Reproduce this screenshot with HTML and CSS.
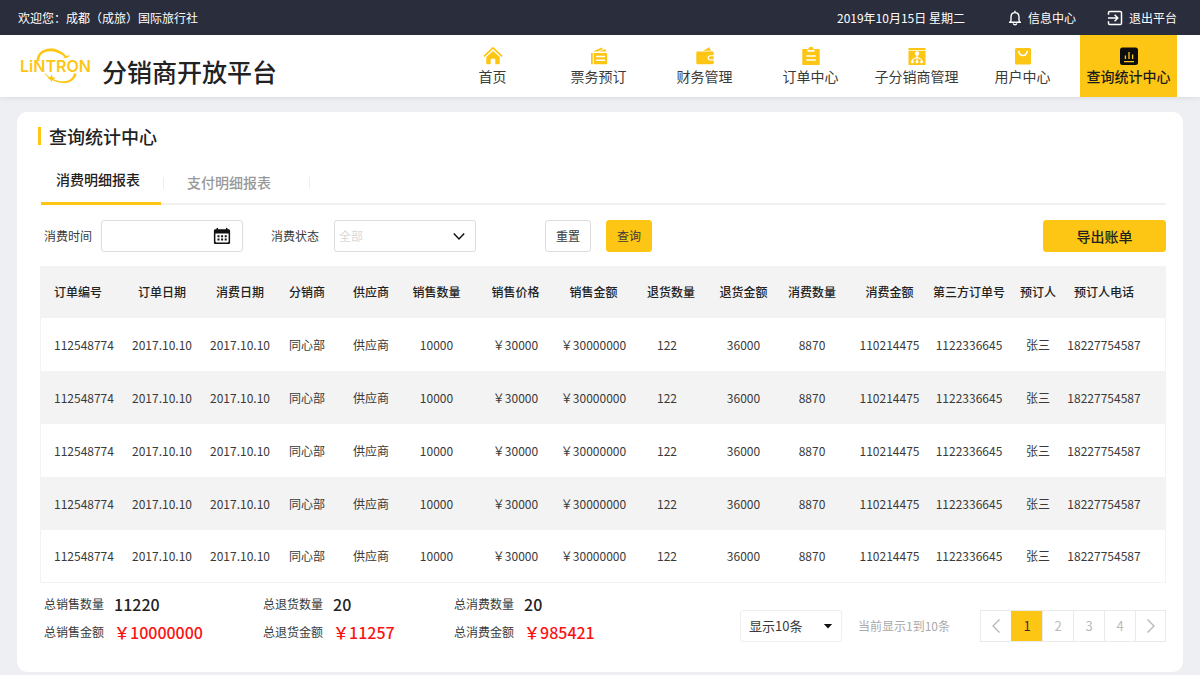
FILE: index.html
```html
<!DOCTYPE html>
<html lang="zh-CN">
<head>
<meta charset="utf-8">
<meta name="viewport" content="width=device-width, initial-scale=1">
<title>查询统计中心 - 分销商开放平台</title>
<link rel="stylesheet" href="styles.css">
</head>
<body>
<div class="topbar">
  <span class="welcome">欢迎您：成都（成旅）国际旅行社</span>
  <span class="today">2019年10月15日 星期二</span>
  <a class="toplink" href="#">
    <svg width="14" height="16" viewBox="0 0 14 16" fill="none" stroke="#fff" stroke-width="1.4"><path d="M1 12.3h12M2.6 12C3.200 10.500 3 9 3 7.200C3 4.400 4.700 2.600 7 2.600s4 1.800 4 4.600c0 1.800-.2 3.300.4 4.800M7 2.600V.8M5.300 13.300c.2 1 .9 1.400 1.700 1.400s1.500-.4 1.700-1.400"/></svg>
    信息中心
  </a>
  <a class="toplink" href="#">
    <svg width="16" height="16" viewBox="0 0 16 16" fill="none" stroke="#fff" stroke-width="1.500"><path d="M1.500 4.800V2.800c0-.8.5-1.300 1.300-1.300h10.400c.8 0 1.300.5 1.300 1.300v10.400c0 .8-.5 1.300-1.300 1.300H2.800c-.8 0-1.300-.5-1.300-1.300v-2M1 8h9.500M7.600 4.800 10.800 8l-3.200 3.200"/></svg>
    退出平台
  </a>
</div>

<header class="header">
  <a class="brand" href="#">
    <svg class="logo" width="76" height="40" viewBox="0 0 76 40">
      <path d="M18.500 15C18.500 6.500 26 1.200 35 2.600c7 1.200 12 5.200 14.400 9.200l-2.400-.5C43 7.500 38 5.200 32.500 5.200 25 5.200 21 9 21.300 15z" fill="#fdc614"/>
      <path d="M27.500 27.500c4 4.500 13 9 20.500 7.600 4.500-.9 7.500-4.200 7.800-7.600h2.700c-.3 4.500-4.400 8.600-10.300 9.400C39 38.200 30.500 32.600 26.500 27.500z" fill="#fdc614"/>
      <path d="M33.500 28.500l1.300 2.800 2.700.9-2.700 1.200-1.300 2.600-1.300-2.600-2.700-1.200 2.700-.9zM45 12.300l2.500-2.300 4.500-.8-2.200 2.400z" fill="#fdc614"/>
      <text class="logo-text" x="2" y="26">LiNTRON</text>
    </svg>
    <span class="brand-name">分销商开放平台</span>
  </a>
  <nav class="nav">
    <a class="nav-item" href="#">
      <svg width="20" height="20" viewBox="0 0 20 20"><path d="M1.500 9.800 10 1.900l8.500 7.900" fill="none" stroke="#fdc614" stroke-width="1.800" stroke-linecap="round" stroke-linejoin="round"/><path d="M3.300 11 10 4.900l6.700 6.100v6.600c0 .4-.3.7-.7.700h-3.700v-4.800c0-.4-.3-.7-.7-.7H8.400c-.4 0-.7.3-.7.700v4.800H4c-.4 0-.7-.3-.7-.7z" fill="#fdc614"/></svg>
      首页
    </a>
    <a class="nav-item" href="#">
      <svg width="20" height="20" viewBox="0 0 20 20" fill="#fdc614"><path d="M4 5.600 12.600 1.500l1.300 1.700-5.400 2.400zM10.500 5.600l5.600-2.500 1.200 2.500zM2 6.900h1.800v11.400H3c-.6 0-1-.4-1-1z"/><path fill-rule="evenodd" d="M4.800 6.900h12.300c.6 0 1 .4 1 1v9.400c0 .6-.4 1-1 1H4.800zM7 9.800v1.400h9V9.800zm0 3.800V15h9v-1.400z"/></svg>
      票务预订
    </a>
    <a class="nav-item" href="#">
      <svg width="20" height="20" viewBox="0 0 20 20" fill="#fdc614"><path d="M8 4.800 14.300 1.300 16 4.800z"/><path fill-rule="evenodd" d="M2.500 5.500h15c.7 0 1.200.5 1.200 1.200v2.500h-3.500a2.600 2.600 0 0 0 0 5.200h3.500v2.700c0 .7-.5 1.200-1.200 1.200h-15c-.7 0-1.200-.5-1.200-1.200V6.700c0-.7.500-1.200 1.200-1.200z"/><path d="M15.300 10.300h3.400v3h-3.400a1.500 1.500 0 0 1 0-3z"/></svg>
      财务管理
    </a>
    <a class="nav-item" href="#">
      <svg width="20" height="20" viewBox="0 0 20 20"><path fill="#fdc614" fill-rule="evenodd" d="M2.300 3h4.900a2.900 2.900 0 0 1 5.600 0h4.900c.6 0 1 .4 1 1v14c0 .6-.4 1-1 1H2.300c-.6 0-1-.4-1-1V4c0-.6.4-1 1-1zM6.500 3.700v2.100h7V3.700h-2.600v.6H9.100v-.6zM5.300 9.300v1.500h9.400V9.300zm0 4V14.800h9.400v-1.500z"/></svg>
      订单中心
    </a>
    <a class="nav-item" href="#">
      <svg width="20" height="20" viewBox="0 0 20 20"><path d="M1.500 2h17v2.200h-17zM1.500 5h17v13c0 .6-.4 1-1 1h-15c-.6 0-1-.4-1-1z" fill="#fdc614"/><path d="M10 8v7M5.400 15v-1.200c0-1.400 4.600-1.400 4.600-3.300 0 1.900 4.600 1.900 4.600 3.300V15" fill="none" stroke="#fff" stroke-width="1.100"/><g fill="#fff"><circle cx="10" cy="7.500" r="2.200"/><circle cx="5.400" cy="15.700" r="1.500"/><circle cx="10" cy="15.700" r="1.500"/><circle cx="14.600" cy="15.700" r="1.500"/></g></svg>
      子分销商管理
    </a>
    <a class="nav-item" href="#">
      <svg width="20" height="20" viewBox="0 0 20 20"><rect x="2" y="2" width="16" height="16.500" rx="1.500" fill="#fdc614"/><path d="M5.800 5.500c.6 2.600 2.200 4 4.200 4s3.600-1.400 4.200-4" fill="none" stroke="#fff" stroke-width="1.500" stroke-linecap="round"/></svg>
      用户中心
    </a>
    <a class="nav-item nav-item-active" href="#" aria-current="page">
      <svg width="20" height="20" viewBox="0 0 20 20"><rect x="1" y="1.500" width="18" height="17.500" rx="2.500" fill="#0d0d0d"/><path d="M6.400 13V9.500M10 13V6M13.600 13V8.500M5 15.600h10" stroke="#fdc614" stroke-width="1.300"/></svg>
      查询统计中心
    </a>
  </nav>
</header>

<main class="card">
  <h1 class="title">查询统计中心</h1>

  <div class="tabs">
    <a class="tab tab-active" href="#" aria-current="true">消费明细报表</a>
    <a class="tab" href="#">支付明细报表</a>
  </div>

  <form class="filters">
    <label class="filter-label" for="time">消费时间</label>
    <div class="field">
      <input class="control" id="time" type="text">
      <svg class="field-icon" width="18" height="18" viewBox="0 0 18 18"><path fill="#111" fill-rule="evenodd" d="M2.500 2.300H3.500V1.500c0-.4.300-.8.800-.8s.8.400.8.800v.8h7.800v-.8c0-.4.300-.8.800-.8s.8.400.8.800v.8h1c.9 0 1.600.7 1.600 1.600v11.500c0 .9-.7 1.600-1.600 1.600h-13c-.9 0-1.600-.7-1.600-1.600V3.900c0-.9.700-1.600 1.600-1.600zM2.400 6.400v8.200c0 .5.300.8.800.8h11.600c.5 0 .8-.3.800-.8V6.400z"/><path d="M4.500 9.200h9.400M4.500 12.600h9.400" stroke="#111" stroke-width="2" stroke-dasharray="2 1.600"/></svg>
    </div>
    <label class="filter-label filter-label-next" for="state">消费状态</label>
    <div class="field">
      <select class="control control-empty" id="state"><option>全部</option></select>
      <svg class="field-icon" width="14" height="14" viewBox="0 0 14 14"><path d="M1.800 4.500 7 10l5.200-5.500" fill="none" stroke="#111" stroke-width="1.500"/></svg>
    </div>
    <button class="btn btn-reset" type="reset">重置</button>
    <button class="btn btn-primary" type="button">查询</button>
    <button class="btn btn-primary btn-export" type="button">导出账单</button>
  </form>

  <table class="orders">
    <thead>
      <tr><th>订单编号</th><th>订单日期</th><th>消费日期</th><th>分销商</th><th>供应商</th><th>销售数量</th><th>销售价格</th><th>销售金额</th><th>退货数量</th><th>退货金额</th><th>消费数量</th><th>消费金额</th><th>第三方订单号</th><th>预订人</th><th>预订人电话</th></tr>
    </thead>
    <tbody>
      <tr><td>112548774</td><td>2017.10.10</td><td>2017.10.10</td><td>同心部</td><td>供应商</td><td>10000</td><td>￥30000</td><td>￥30000000</td><td>122</td><td>36000</td><td>8870</td><td>110214475</td><td>1122336645</td><td>张三</td><td>18227754587</td></tr>
      <tr><td>112548774</td><td>2017.10.10</td><td>2017.10.10</td><td>同心部</td><td>供应商</td><td>10000</td><td>￥30000</td><td>￥30000000</td><td>122</td><td>36000</td><td>8870</td><td>110214475</td><td>1122336645</td><td>张三</td><td>18227754587</td></tr>
      <tr><td>112548774</td><td>2017.10.10</td><td>2017.10.10</td><td>同心部</td><td>供应商</td><td>10000</td><td>￥30000</td><td>￥30000000</td><td>122</td><td>36000</td><td>8870</td><td>110214475</td><td>1122336645</td><td>张三</td><td>18227754587</td></tr>
      <tr><td>112548774</td><td>2017.10.10</td><td>2017.10.10</td><td>同心部</td><td>供应商</td><td>10000</td><td>￥30000</td><td>￥30000000</td><td>122</td><td>36000</td><td>8870</td><td>110214475</td><td>1122336645</td><td>张三</td><td>18227754587</td></tr>
      <tr><td>112548774</td><td>2017.10.10</td><td>2017.10.10</td><td>同心部</td><td>供应商</td><td>10000</td><td>￥30000</td><td>￥30000000</td><td>122</td><td>36000</td><td>8870</td><td>110214475</td><td>1122336645</td><td>张三</td><td>18227754587</td></tr>
    </tbody>
  </table>

  <div class="summary">
    <dl class="totals">
      <div class="total"><dt>总销售数量</dt><dd>11220</dd></div>
      <div class="total"><dt>总退货数量</dt><dd>20</dd></div>
      <div class="total"><dt>总消费数量</dt><dd>20</dd></div>
      <div class="total"><dt>总销售金额</dt><dd class="money">￥10000000</dd></div>
      <div class="total"><dt>总退货金额</dt><dd class="money">￥11257</dd></div>
      <div class="total"><dt>总消费金额</dt><dd class="money">￥985421</dd></div>
    </dl>
    <div class="pager">
      <div class="field field-size">
        <select class="control control-size" aria-label="每页条数"><option>显示10条</option></select>
        <svg class="field-icon" width="10" height="10" viewBox="0 0 10 10"><path d="M.8 3h8.400L5 7.500z" fill="#111"/></svg>
      </div>
      <span class="range">当前显示1到10条</span>
      <div class="pages">
        <button class="page" type="button" aria-label="上一页"><svg width="12" height="16" viewBox="0 0 12 16"><path d="M9.500 1.500 3 8l6.500 6.500" fill="none" stroke="#b5b5b5" stroke-width="1.300"/></svg></button>
        <button class="page page-active" type="button">1</button>
        <button class="page" type="button">2</button>
        <button class="page" type="button">3</button>
        <button class="page" type="button">4</button>
        <button class="page" type="button" aria-label="下一页"><svg width="12" height="16" viewBox="0 0 12 16"><path d="M2.500 1.500 9 8l-6.500 6.500" fill="none" stroke="#b5b5b5" stroke-width="1.300"/></svg></button>
      </div>
    </div>
  </div>
</main>
</body>
</html>
```
FILE: styles.css
```css
* {
  box-sizing: border-box;
}

body {
  margin: 0;
  background: #eeeff3;
  color: #3a3a3a;
  font-family: "Noto Sans CJK SC", "Noto Sans", sans-serif;
  font-size: 12px;
  line-height: 18px;
}

a {
  color: inherit;
  text-decoration: none;
}

button,
input,
select {
  font: inherit;
  color: inherit;
}

svg {
  display: block;
  flex: none;
}

/* Top bar */
.topbar {
  display: flex;
  align-items: center;
  height: 35px;
  padding: 0 23px 0 18px;
  background: #2a2d3b;
  color: #fff;
}

.welcome {
  margin-right: auto;
}

.today {
  margin-right: 12px;
}

.toplink {
  display: flex;
  align-items: center;
  gap: 6px;
  margin-left: 31px;
}

/* Header */
.header {
  display: flex;
  justify-content: space-between;
  height: 62px;
  padding: 0 23px 0 18px;
  background: #fff;
  box-shadow: 0 1px 5px rgba(40, 60, 80, 0.1);
}

.brand {
  display: flex;
  align-items: center;
  gap: 8px;
}

.logo-text {
  fill: #fdc614;
  font-family: Inter, sans-serif;
  font-size: 16px;
  font-weight: 600;
}

.brand-name {
  padding-top: 10px;
  color: #222;
  font-size: 25px;
  font-weight: 500;
  line-height: 32px;
}

.nav {
  display: flex;
  gap: 9px;
}

.nav-item {
  display: flex;
  flex-direction: column;
  align-items: center;
  width: 97px;
  padding-top: 11px;
  font-size: 14px;
  line-height: 20px;
  white-space: nowrap;
}

.nav-item-active {
  background: #fdc614;
  color: #1c1c1c;
  font-weight: 500;
}

/* Content card */
.card {
  margin: 15px 17px 2px;
  padding: 11px 17px 26px 23px;
  border-radius: 10px;
  background: #fff;
}

.title {
  display: flex;
  align-items: center;
  gap: 8px;
  margin: 0 0 0 -2px;
  color: #222;
  font-size: 18px;
  font-weight: 500;
  line-height: 26px;
}

.title::before {
  content: "";
  width: 3px;
  height: 18px;
  background: #fdc614;
}

.tabs {
  display: flex;
  margin: 7px 0 15px 1px;
  box-shadow: inset 0 -2px #f1f1f1;
}

.tab {
  display: flex;
  align-items: center;
  width: 147px;
  height: 49px;
  padding: 2px 0 0 24px;
  background:
    linear-gradient(#eee, #eee) left 21px / 1px 12px no-repeat,
    linear-gradient(#eee, #eee) right 21px / 1px 12px no-repeat;
  color: #999;
  font-size: 14px;
  font-weight: 500;
}

.tab-active {
  width: 120px;
  margin-right: 2px;
  padding: 0 0 0 15px;
  border-bottom: 3px solid #fdc614;
  background: none;
  color: #222;
}

/* Filters */
.filters {
  display: flex;
  align-items: center;
  margin-bottom: 14px;
}

.filter-label {
  width: 61px;
  padding-left: 4px;
}

.filter-label-next {
  width: 91px;
  padding-left: 28px;
}

.field {
  position: relative;
  width: 142px;
}

.control {
  display: block;
  width: 100%;
  height: 32px;
  padding: 0 30px 0 4px;
  border: 1px solid #ddd;
  border-radius: 3px;
  background: #fff;
  appearance: none;
}

.control-empty {
  color: #d8d8d8;
}

.field-icon {
  position: absolute;
  top: 50%;
  right: 12px;
  transform: translateY(-50%);
  pointer-events: none;
}

.field:nth-of-type(2) .field-icon {
  right: 10px;
}

.btn {
  width: 46px;
  height: 32px;
  padding: 0;
  border: 1px solid #ddd;
  border-radius: 3px;
  background: #fff;
}

.btn-reset {
  margin: 0 15px 0 69px;
}

.btn-primary {
  border-color: #fdc614;
  background: #fdc614;
}

.btn-export {
  width: 123px;
  margin-left: auto;
  color: #222;
  font-size: 14px;
  font-weight: 500;
}

/* Orders table */
.orders {
  width: 100%;
  border: 1px solid #f3f3f3;
  border-spacing: 0;
  table-layout: fixed;
}

.orders th,
.orders td {
  height: 53px;
  padding: 0;
  text-align: center;
  white-space: nowrap;
}

.orders th {
  height: 51px;
  padding-bottom: 2px;
  background: #f3f3f3;
  color: #222;
  font-weight: 500;
}

.orders tbody tr:nth-child(even) {
  background: #f3f3f3;
}

.orders tr:last-child td {
  height: 52px;
}

.orders th:first-child,
.orders td:first-child {
  padding-left: 13px;
  text-align: left;
}

.orders td:nth-child(9) {
  padding-right: 8px;
}

.orders th:last-child,
.orders td:last-child {
  padding-right: 22px;
}

.orders th:nth-child(1) { width: 77px; }
.orders th:nth-child(2) { width: 88px; }
.orders th:nth-child(3) { width: 68px; }
.orders th:nth-child(4) { width: 66px; }
.orders th:nth-child(5) { width: 62px; }
.orders th:nth-child(6) { width: 69px; }
.orders th:nth-child(7) { width: 89px; }
.orders th:nth-child(8) { width: 67px; }
.orders th:nth-child(9) { width: 88px; }
.orders th:nth-child(10) { width: 57px; }
.orders th:nth-child(11) { width: 80px; }
.orders th:nth-child(12) { width: 75px; }
.orders th:nth-child(13) { width: 84px; }
.orders th:nth-child(14) { width: 54px; }
.orders th:nth-child(15) { width: 100px; }

/* Totals and paging */
.summary {
  display: flex;
  justify-content: space-between;
  padding-top: 7px;
}

.totals {
  display: grid;
  grid-template-columns: 219px 191px auto;
  margin: 0 0 0 4px;
}

.total {
  display: flex;
  align-items: center;
  gap: 10px;
  height: 28px;
}

.total dd {
  margin: 0;
  color: #222;
  font-size: 16px;
  font-weight: 500;
}

.total .money {
  color: #fb1313;
}

.pager {
  display: flex;
  align-items: center;
  padding-top: 16px;
}

.field-size {
  width: 102px;
}

.control-size {
  padding-left: 5px;
  border-color: #eee;
  font-size: 13px;
}

.field-size .field-icon {
  right: 9px;
}

.control-size {
  padding-left: 8px;
}

.range {
  margin: 0 30px 0 16px;
  color: #aaa;
}

.pages {
  display: flex;
  border: 1px solid #eaeaea;
}

.page {
  display: flex;
  align-items: center;
  justify-content: center;
  width: 31px;
  height: 30px;
  padding: 0;
  border: 0;
  border-left: 1px solid #eaeaea;
  background: #fff;
  color: #bbb;
  font-size: 13px;
}

.page:first-child,
.page:last-child {
  width: 30px;
}

.page:first-child {
  border-left: 0;
}

.page-active {
  border-color: #fdc614;
  background: #fdc614;
  color: #333;
}
```
